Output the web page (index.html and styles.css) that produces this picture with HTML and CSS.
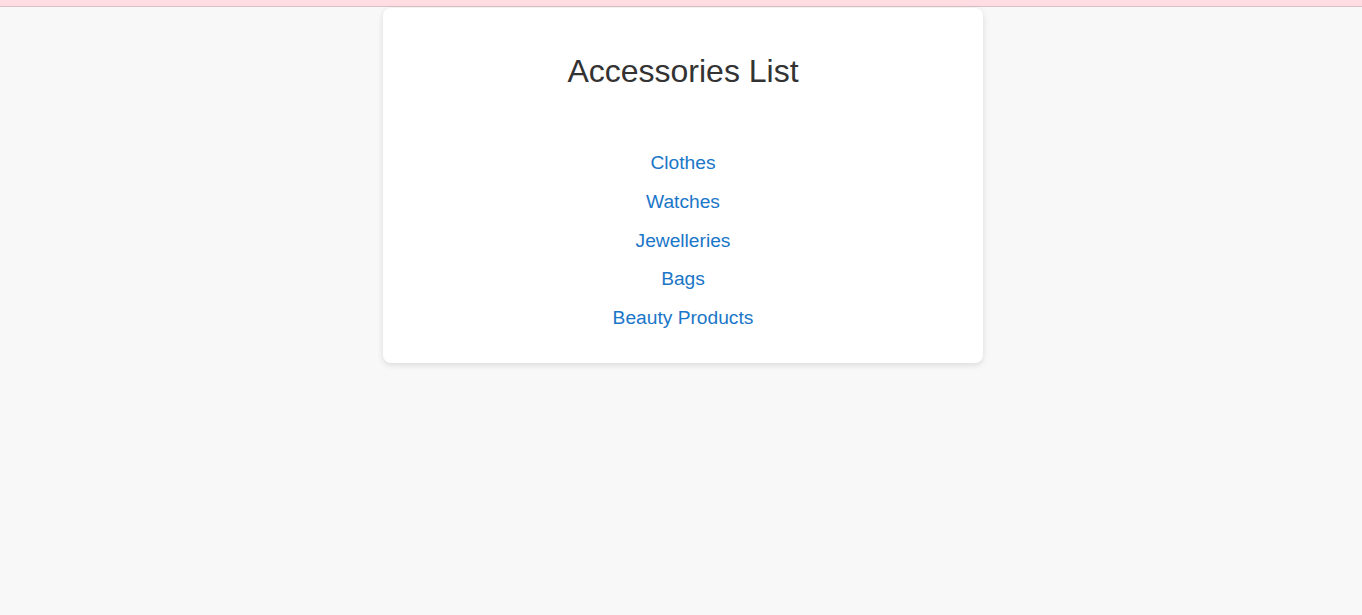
FILE: index.html
```html
<!DOCTYPE html>
<html lang="en">
<head>
<meta charset="utf-8">
<title>Accessories List</title>
<link rel="stylesheet" href="styles.css">
</head>
<body>
<div class="topbar"></div>
<main class="card">
  <h1 class="title">Accessories List</h1>
  <ul class="list">
    <li><a href="#">Clothes</a></li>
    <li><a href="#">Watches</a></li>
    <li><a href="#">Jewelleries</a></li>
    <li><a href="#">Bags</a></li>
    <li><a href="#">Beauty Products</a></li>
  </ul>
</main>
</body>
</html>
```
FILE: styles.css
```css
html, body {
  margin: 0;
  padding: 0;
}
body {
  background: #f8f8f8;
  font-family: "Liberation Sans", Arial, sans-serif;
  min-height: 615px;
  padding-left: 4px;
}
.topbar {
  height: 6px;
  margin-left: -4px;
  background: #ffdde3;
  border-bottom: 1px solid #dcc0c5;
}
.card {
  width: 600px;
  box-sizing: border-box;
  margin: 1px auto 0;
  background: #ffffff;
  border-radius: 8px;
  box-shadow: 0 2px 6px rgba(0, 0, 0, 0.12);
  padding: 20px;
  text-align: center;
}
.title {
  margin: 25px 0 0;
  font-size: 32px;
  font-weight: normal;
  color: #333333;
  line-height: 37px;
}
.list {
  list-style: none;
  margin: 62px 0 14px;
  padding: 0;
  display: flex;
  flex-direction: column;
  align-items: center;
  gap: 16.8px;
}
.list li {
  font-size: 19.2px;
  line-height: 22px;
}
.list a {
  color: #1a76c8;
  text-decoration: none;
}
```
